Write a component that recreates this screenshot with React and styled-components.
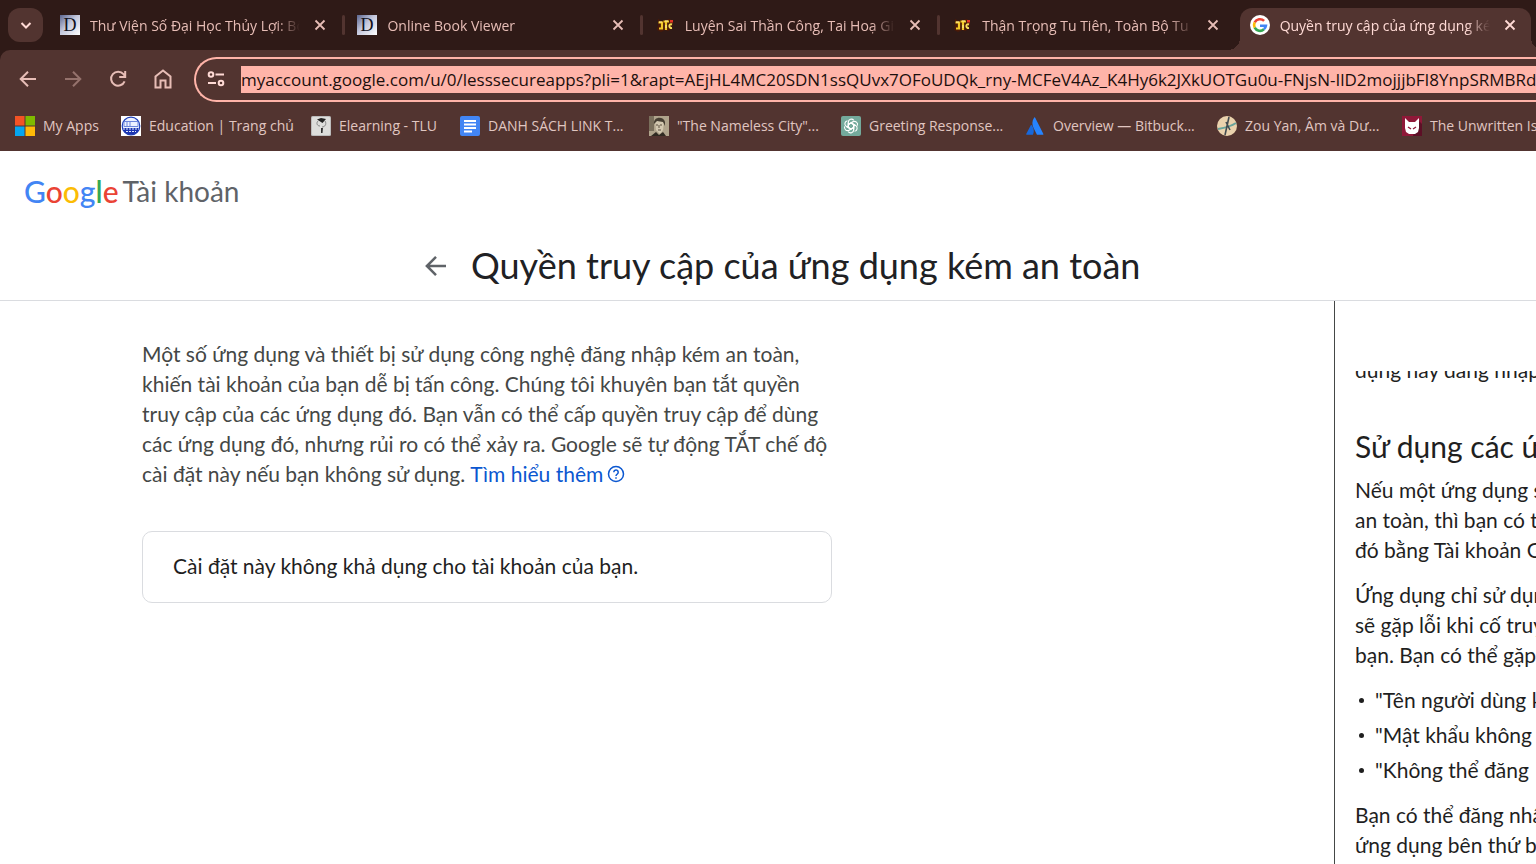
import React from "react";
import styled, { createGlobalStyle, css } from "styled-components";

const ui = `"Open Sans", "Noto Sans", sans-serif`;
const body = `Lato, Roboto, sans-serif`;

const GlobalStyle = createGlobalStyle`
  *, *::before, *::after { box-sizing: border-box; }
  body { margin: 0; background: #fff; overflow: hidden; font-family: ${body}; }
  button { border: 0; padding: 0; background: none; color: inherit; font: inherit; cursor: pointer; }
`;

const Window = styled.div`
  display: flex;
  flex-direction: column;
  height: 100vh;
  overflow: hidden;
`;

/* Browser chrome */
const TabStrip = styled.div`
  display: flex;
  flex: none;
  height: 50px;
  background: #2f1a17;
  color: #e7bdb6;
  font: 14px/20px ${ui};
`;
const TabSearch = styled.button`
  display: flex;
  align-items: center;
  justify-content: center;
  flex: none;
  width: 35px;
  height: 34px;
  margin: 8px 7px 0 8px;
  border-radius: 12px;
  background: #523430;
  color: #ffdad5;
`;
const TabItem = styled.div`
  position: relative;
  display: flex;
  align-items: center;
  gap: 10px;
  flex: 1 1 0;
  min-width: 0;
  height: 42px;
  margin-top: 8px;
  padding: 0 10px;
  padding-bottom: 8px;
  ${(p) =>
    p.$active
      ? css`
          margin-right: 5px;
          padding-right: 4px;
          border-radius: 12px 12px 0 0;
          background: #523430;
          color: #ffdad5;
          &::before,
          &::after {
            content: "";
            position: absolute;
            bottom: 0;
            width: 12px;
            height: 12px;
          }
          &::before {
            right: 100%;
            background: radial-gradient(circle at 0 0, transparent 12px, #523430 12px);
          }
          &::after {
            left: 100%;
            background: radial-gradient(circle at 100% 0, transparent 12px, #523430 12px);
          }
        `
      : css`
          &::after {
            content: "";
            position: absolute;
            right: 2px;
            top: 7px;
            width: 3px;
            height: 20px;
            border-radius: 2px;
            background: ${p.$last ? "transparent" : "#523430"};
          }
        `}
`;
const TabTitle = styled.span`
  flex: 1;
  min-width: 0;
  padding-top: 2px;
  overflow: hidden;
  white-space: nowrap;
  mask-image: linear-gradient(to right, #000 calc(100% - 24px), transparent);
`;
const CloseButton = styled.button`
  display: flex;
  align-items: center;
  justify-content: center;
  flex: none;
  width: 20px;
  height: 20px;
  margin-right: 7px;
`;

const Toolbar = styled.div`
  display: flex;
  align-items: center;
  flex: none;
  height: 58px;
  padding-left: 16px;
  gap: 21px;
  background: #523430;
  border-top-left-radius: 10px;
  color: #e7bdb6;
`;
const ToolbarBack = styled.div`
  flex: none;
  background: #2f1a17;
`;
const ToolButton = styled.button`
  display: flex;
  flex: none;
  width: 24px;
  height: 24px;
  opacity: ${(p) => (p.disabled ? 0.45 : 1)};
`;
const Omnibox = styled.label`
  display: flex;
  align-items: center;
  flex: 1;
  min-width: 0;
  height: 45px;
  margin-left: -2px;
  padding-left: 10px;
  gap: 15px;
  border: 2px solid #ffb4a9;
  border-right: 0;
  border-radius: 23px 0 0 23px;
  color: #ffdad5;
`;
const UrlInput = styled.input`
  flex: 1;
  min-width: 0;
  height: 27px;
  padding: 0;
  border: 0;
  outline: 0;
  background: #ffb4a9;
  color: #1c0f0d;
  font: 17px/27px ${ui};
`;

const BookmarkBar = styled.nav`
  display: flex;
  align-items: center;
  flex: none;
  height: 43px;
  padding: 0 0 7px 15px;
  overflow: hidden;
  background: #523430;
  font: 14px/20px ${ui};
`;
const Bookmark = styled.a`
  display: flex;
  align-items: center;
  gap: 8px;
  flex: none;
  width: ${(p) => p.$width}px;
  color: #e0c6c1;
  text-decoration: none;
  white-space: nowrap;
`;
const Favicon = styled.svg`
  display: block;
  flex: none;
  width: 20px;
  height: 20px;
`;

/* Account page */
const PageHeader = styled.header`
  flex: none;
  border-bottom: 1px solid #dadce0;
`;
const Brand = styled.a`
  display: flex;
  align-items: center;
  gap: 4px;
  height: 80px;
  padding-left: 24px;
  color: #5f6368;
  font-size: 28px;
  line-height: 36px;
  text-decoration: none;
`;
const Wordmark = styled.span`
  font: 500 30px/36px ${body};
`;
const Letter = styled.span`
  color: ${(p) => p.$color};
`;
const TitleRow = styled.div`
  display: flex;
  align-items: center;
  gap: 20px;
  height: 69px;
  padding-left: 421px;
`;
const BackButton = styled.button`
  display: flex;
  width: 30px;
  height: 30px;
  color: #5f6368;
`;
const Title = styled.h1`
  margin: 0;
  padding-bottom: 2px;
  color: #202124;
  font-size: 36px;
  font-weight: 400;
  line-height: 44px;
  white-space: nowrap;
`;
const Columns = styled.div`
  display: flex;
  flex: 1;
  min-height: 0;
`;
const Content = styled.main`
  flex: 1;
  min-width: 0;
  padding: 38px 142px 0;
`;
const Intro = styled.p`
  margin: 0 0 42px;
  color: #444746;
  font-size: 21px;
  line-height: 30px;
  white-space: nowrap;
`;
const Line = styled.span`
  display: flex;
  align-items: center;
  gap: 5px;
`;
const HelpLink = styled.a`
  display: flex;
  align-items: center;
  gap: 4px;
  color: #0b57d0;
  text-decoration: none;
`;
const Card = styled.section`
  max-width: 690px;
  padding: 19px 30px 21px;
  border: 1px solid #dadce0;
  border-radius: 10px;
  color: #1f1f1f;
  font-size: 21px;
  line-height: 30px;
`;
const HelpPanel = styled.aside`
  flex: none;
  width: 202px;
  padding: 70px 0 0 20px;
  border-left: 1px solid #444746;
`;
const HelpScroll = styled.div`
  height: 100%;
  overflow: hidden;
  color: #1f1f1f;
  font-size: 21px;
  line-height: 30px;
  white-space: pre;
  p { margin: 0 0 15px; }
  p:first-child { margin: -16px 0 43px; }
  h2 {
    margin: 0 0 11px;
    font-size: 30px;
    font-weight: 400;
    line-height: 36px;
  }
  ul {
    display: grid;
    gap: 5px;
    margin: 0 0 15px;
    padding: 0;
    list-style: none;
  }
  li {
    display: flex;
    align-items: center;
    gap: 11px;
    padding-left: 4px;
  }
  li::before {
    content: "";
    width: 5px;
    height: 5px;
    border-radius: 50%;
    background: #1f1f1f;
  }
`;

const stroke = { fill: "none", stroke: "currentColor", strokeWidth: 2 };

const DFavicon = () => (
  <Favicon viewBox="0 0 20 20">
    <defs>
      <linearGradient id="dbg" x1="0" y1="0" x2="1" y2="1">
        <stop offset="0" stopColor="#5c6690" />
        <stop offset=".45" stopColor="#c3c7dc" />
        <stop offset="1" stopColor="#fff" />
      </linearGradient>
    </defs>
    <path fill="url(#dbg)" d="M0 0h20v20H0z" />
    <text x="10" y="16" textAnchor="middle" fontFamily="Liberation Serif, serif" fontSize="18" fill="#10101c">D</text>
  </Favicon>
);
const StoryFavicon = () => (
  <Favicon viewBox="0 0 20 20">
    <path d="m3 4 4 2 4-1 4-1 3 3-1 7-4 2-3-1-4 2-4-2 1-5z" fill="#4a1a08" />
    <path d="M3.500 7.500H8M7 7v6.500H4M8.500 6.500H14M11 6v9" fill="none" stroke="#f4c928" strokeWidth="2.200" />
    <path d="M17 9.500c-3.500-1.500-3.500 4 0 3.500" fill="none" stroke="#f7de5c" strokeWidth="2" />
    <path d="M15 5h3v2.500h-3z" fill="#e33425" />
    <path d="M4 7h3M10 6h3M11 10v3" stroke="#fff3a0" strokeWidth="1" />
  </Favicon>
);
const GoogleFavicon = () => (
  <Favicon viewBox="0 0 20 20">
    <circle cx="10" cy="10" r="10" fill="#fff" />
    <g fill="none" strokeWidth="2.6">
      <path d="M14.1 5.9A5.9 5.9 0 0 0 4.7 7.4" stroke="#ea4335" />
      <path d="M4.7 7.4a5.9 5.9 0 0 0 0 5.2" stroke="#fbbc05" />
      <path d="M4.7 12.6a5.9 5.9 0 0 0 9.2 1.7" stroke="#34a853" />
      <path d="M13.9 14.3A5.6 5.6 0 0 0 15.9 10.8H10" stroke="#4285f4" />
    </g>
  </Favicon>
);
const MicrosoftIcon = () => (
  <Favicon viewBox="0 0 20 20">
    <path fill="#f35325" d="M0 0h9.5v9.5H0z" />
    <path fill="#7fba00" d="M10.5 0H20v9.5h-9.5z" />
    <path fill="#05a6f0" d="M0 10.5h9.5V20H0z" />
    <path fill="#ffba08" d="M10.5 10.5H20V20h-9.5z" />
  </Favicon>
);
const SchoolIcon = () => (
  <Favicon viewBox="0 0 20 20">
    <path fill="#fff" d="M0 0h20v20H0z" />
    <circle cx="10" cy="10" r="8.8" fill="#edf2ff" stroke="#1d3fbb" strokeWidth="1.2" />
    <path d="M1.5 12h17a8.8 8.8 0 0 1-17 0z" fill="#1b35b0" />
    <path d="M3 5.5h14v5H3zM6 6v4M9 6v4" fill="none" stroke="#6c86dc" />
    <path d="M2 13h16M5 15.5h10" stroke="#dfe6ff" strokeDasharray="2 1" />
  </Favicon>
);
const ElearningIcon = () => (
  <Favicon viewBox="0 0 20 20">
    <rect width="20" height="20" rx="1.5" fill="#bcbcbc" />
    <rect x="1" y="1" width="18" height="18" rx="1" fill="#dededc" />
    <path d="m6 3.5 4-1.5 5 1-3.5 4z" fill="#222" />
    <path d="M7 5c-2 2-1 5 2 5M14 5c2 3 0 6-3 6" fill="none" stroke="#888" />
    <path d="M10 12h2l-.5 5H10z" fill="#333" />
  </Favicon>
);
const DocsIcon = () => (
  <Favicon viewBox="0 0 20 20">
    <rect width="20" height="20" rx="2" fill="#4285f4" />
    <path d="M4 5h12M4 8.5h12M4 12h12M4 15.5h8" stroke="#fff" strokeWidth="2" />
  </Favicon>
);
const PortraitIcon = () => (
  <Favicon viewBox="0 0 20 20">
    <path fill="#b0a48c" d="M0 0h20v20H0z" />
    <path fill="#7a6f5c" d="M0 0h5v15H0z" />
    <path fill="#d3c8b0" d="M6 5c1-3 8-3 9 1l-1 8-3 4-4-4z" />
    <path d="M5 8c-1-8 10-8 11-2v4l-2-4-6-1-2 2z" fill="#463e32" />
    <path d="m2 20 5-4 3 3 4-3 3 4z" fill="#302a22" />
    <path d="M7 9h2M11 9h2M10 9v3M9 14h3" stroke="#5c5140" />
  </Favicon>
);
const ChatIcon = () => (
  <Favicon viewBox="0 0 20 20">
    <rect width="20" height="20" rx="2" fill="#74aa9c" />
    <g fill="none" stroke="#fff" strokeWidth="1.1">
      {[0, 60, 120, 180, 240, 300].map((a) => (
        <path key={a} transform={`rotate(${a} 10 10)`} d="M7.3 11.5V6.2a3.1 3.1 0 0 1 5.5-1.9M7.3 8.4 10 6.9l4.4 2.5" />
      ))}
    </g>
  </Favicon>
);
const AtlassianIcon = () => (
  <Favicon viewBox="0 0 20 20">
    <path d="M5.8 9.2 1.2 18q-.3.8.6.8h5.6q.5 0 .7-.5c1.4-3 .7-6.5-1.4-9.1-.3-.4-.7-.4-.9 0z" fill="#1868db" />
    <path d="M9.2 1.6C6.7 5.4 7 9 8.7 12.3l3 6q.2.5.8.5h5.3q1 0 .6-.8L10.2 1.7q-.5-.8-1-.1z" fill="#2684ff" />
  </Favicon>
);
const GlobeIcon = () => (
  <Favicon viewBox="0 0 20 20">
    <circle cx="10" cy="10" r="10" fill="#ead2ad" />
    <path d="M1 13c6-1 12-2 18-6" fill="none" stroke="#68a49b" strokeWidth="2" />
    <path d="M12 1 8 19M9 6l4 8" fill="none" stroke="#424b50" strokeWidth="1.6" />
  </Favicon>
);
const CatIcon = () => (
  <Favicon viewBox="0 0 20 20">
    <path fill="#8f1838" d="M0 0h20v20H0z" />
    <path fill="#5d0f26" d="m16 4 4 4v12h-9z" />
    <path fill="#fff" d="m3 2 4 4h6l4-4v10l-1 4-3 2H7l-3-2-1-4z" />
    <path d="m6 11 3 2M14 11l-3 2" stroke="#8f1838" strokeWidth="1.4" />
  </Favicon>
);

const CloseIcon = () => (
  <svg width="12" height="12" viewBox="0 0 12 12" {...stroke} strokeWidth="1.8">
    <path d="m1.5 1.5 9 9M10.5 1.5l-9 9" />
  </svg>
);
const LeftArrow = ({ size }) => (
  <svg width={size} height={size} viewBox="0 0 24 24" {...stroke}>
    <path d="M20 12H5M12 4.7 4.7 12l7.3 7.3" />
  </svg>
);

const tabs = [
  ["Thư Viện Số Đại Học Thủy Lợi: Bộ", DFavicon],
  ["Online Book Viewer", DFavicon],
  ["Luyện Sai Thần Công, Tai Hoạ Giáng", StoryFavicon],
  ["Thận Trọng Tu Tiên, Toàn Bộ Tu Tiên", StoryFavicon],
  ["Quyền truy cập của ứng dụng kém", GoogleFavicon],
];
const bookmarks = [
  ["My Apps", MicrosoftIcon, 106],
  ["Education | Trang chủ", SchoolIcon, 190],
  ["Elearning - TLU", ElearningIcon, 149],
  ["DANH SÁCH LINK T...", DocsIcon, 189],
  ["\"The Nameless City\"...", PortraitIcon, 192],
  ["Greeting Response...", ChatIcon, 184],
  ["Overview — Bitbuck...", AtlassianIcon, 192],
  ["Zou Yan, Âm và Dư...", GlobeIcon, 185],
  ["The Unwritten Isles", CatIcon, 185],
];
const google = [
  ["G", "#4285f4"],
  ["o", "#ea4335"],
  ["o", "#fbbc05"],
  ["g", "#4285f4"],
  ["l", "#34a853"],
  ["e", "#ea4335"],
];
const introLines = [
  "Một số ứng dụng và thiết bị sử dụng công nghệ đăng nhập kém an toàn,",
  "khiến tài khoản của bạn dễ bị tấn công. Chúng tôi khuyên bạn tắt quyền",
  "truy cập của các ứng dụng đó. Bạn vẫn có thể cấp quyền truy cập để dùng",
  "các ứng dụng đó, nhưng rủi ro có thể xảy ra. Google sẽ tự động TẮT chế độ",
];
const url =
  "myaccount.google.com/u/0/lesssecureapps?pli=1&rapt=AEjHL4MC20SDN1ssQUvx7OFoUDQk_rny-MCFeV4Az_K4Hy6k2JXkUOTGu0u-FNjsN-IlD2mojjjbFI8YnpSRMBRd6c";

export default function App() {
  return (
    <Window>
      <GlobalStyle />
      <TabStrip>
        <TabSearch aria-label="Search tabs">
          <svg width="14" height="14" viewBox="0 0 14 14" {...stroke}>
            <path d="m2.5 5 4.5 4.5L11.5 5" />
          </svg>
        </TabSearch>
        {tabs.map(([title, Icon], i) => (
          <TabItem key={title} $active={i === 4} $last={i === 3}>
            <Icon />
            <TabTitle>{title}</TabTitle>
            <CloseButton aria-label="Close tab">
              <CloseIcon />
            </CloseButton>
          </TabItem>
        ))}
      </TabStrip>
      <ToolbarBack>
        <Toolbar>
          <ToolButton aria-label="Back">
            <LeftArrow size={24} />
          </ToolButton>
          <ToolButton aria-label="Forward" disabled>
            <svg width="24" height="24" viewBox="0 0 24 24" {...stroke}>
              <path d="M4 12H19M12 4.7l7.3 7.3-7.3 7.3" />
            </svg>
          </ToolButton>
          <ToolButton aria-label="Reload">
            <svg width="24" height="24" viewBox="0 0 24 24" {...stroke}>
              <path d="M18.6 14.3A7 7 0 1 1 17.5 7.2L19 9M19.2 4v6h-6" />
            </svg>
          </ToolButton>
          <ToolButton aria-label="Home">
            <svg width="24" height="24" viewBox="0 0 24 24" {...stroke}>
              <path d="M4.5 20.5V9.5L12 3.500l7.500 6v11h-5v-7h-5v7z" />
            </svg>
          </ToolButton>
          <Omnibox>
            <svg width="20" height="20" viewBox="0 0 20 20" {...stroke}>
              <circle cx="5" cy="5.5" r="2.3" />
              <path d="M9.5 5.5H18M2 14h8" />
              <circle cx="15" cy="14" r="2.3" />
            </svg>
            <UrlInput aria-label="Address" defaultValue={url} spellCheck={false} />
          </Omnibox>
        </Toolbar>
      </ToolbarBack>
      <BookmarkBar>
        {bookmarks.map(([label, Icon, width]) => (
          <Bookmark key={label} href="#" $width={width}>
            <Icon />
            {label}
          </Bookmark>
        ))}
      </BookmarkBar>

      <PageHeader>
        <Brand href="#">
          <Wordmark>
            {google.map(([c, color], i) => (
              <Letter key={i} $color={color}>{c}</Letter>
            ))}
          </Wordmark>
          Tài khoản
        </Brand>
        <TitleRow>
          <BackButton aria-label="Quay lại">
            <LeftArrow size={30} />
          </BackButton>
          <Title>Quyền truy cập của ứng dụng kém an toàn</Title>
        </TitleRow>
      </PageHeader>
      <Columns>
        <Content>
          <Intro>
            {introLines.map((line) => (
              <Line key={line}>{line}</Line>
            ))}
            <Line>
              cài đặt này nếu bạn không sử dụng.
              <HelpLink href="#">
                Tìm hiểu thêm
                <svg width="18" height="18" viewBox="0 0 18 18" {...stroke} strokeWidth="1.5">
                  <circle cx="9" cy="9" r="7.5" />
                  <path d="M6.8 7.2a2.2 2.2 0 1 1 3.7 1.6C9.5 9.6 9 9.9 9 11M9 12.2v1.5" />
                </svg>
              </HelpLink>
            </Line>
          </Intro>
          <Card>Cài đặt này không khả dụng cho tài khoản của bạn.</Card>
        </Content>
        <HelpPanel>
          <HelpScroll>
            <p>dụng này đăng nhập</p>
            <h2>Sử dụng các ứng dụng</h2>
            <p>{"Nếu một ứng dụng sử\nan toàn, thì bạn có thể\nđó bằng Tài khoản Google"}</p>
            <p>{"Ứng dụng chỉ sử dụng\nsẽ gặp lỗi khi cố truy\nbạn. Bạn có thể gặp"}</p>
            <ul>
              <li>"Tên người dùng không</li>
              <li>"Mật khẩu không</li>
              <li>"Không thể đăng</li>
            </ul>
            <p>{"Bạn có thể đăng nhập\nứng dụng bên thứ ba"}</p>
          </HelpScroll>
        </HelpPanel>
      </Columns>
    </Window>
  );
}
